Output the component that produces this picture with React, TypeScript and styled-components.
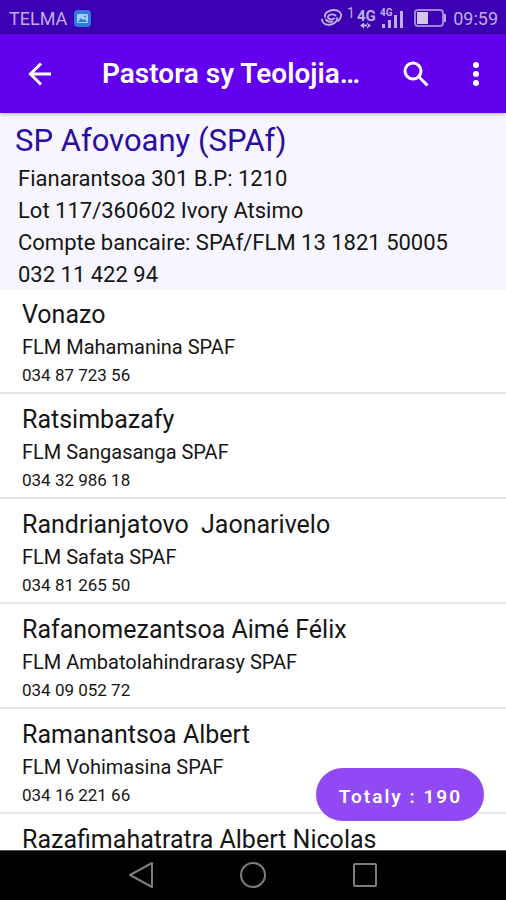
import React from "react";
import styled, { createGlobalStyle } from "styled-components";

const GlobalStyle = createGlobalStyle`
  * { box-sizing: border-box; }
  body {
    margin: 0;
    font-family: Roboto, "Noto Sans", sans-serif;
    background: #fff;
    color: #161616;
  }
`;

const Screen = styled.div`
  position: relative;
  display: flex;
  flex-direction: column;
  height: 100vh;
  overflow: hidden;
`;

const StatusBar = styled.div`
  flex: none;
  display: flex;
  align-items: center;
  justify-content: space-between;
  height: 34px;
  padding: 2px 8px 0 9px;
  background: #3a00b2;
  color: #c0aee6;
  font-size: 18px;
`;

const StatusGroup = styled.div<{ $gap: number }>`
  display: flex;
  align-items: center;
  gap: ${(p) => p.$gap}px;
`;

const AppBar = styled.header`
  position: relative;
  z-index: 1;
  flex: none;
  display: flex;
  align-items: center;
  gap: 20px;
  height: 79px;
  padding: 0 10px 0 20px;
  background: #6200ee;
  color: #fff;
  box-shadow: 0 1px 4px rgba(0, 0, 0, 0.3);
`;

const BarTitle = styled.h1`
  flex: 1;
  min-width: 0;
  margin: 0 0 0 22px;
  white-space: nowrap;
  font-size: 28px;
  font-weight: 600;
  line-height: 40px;
`;

const IconButton = styled.button`
  flex: none;
  display: flex;
  align-items: center;
  justify-content: center;
  width: 40px;
  height: 48px;
  padding: 0;
  border: 0;
  background: none;
  color: inherit;
`;

const Office = styled.section`
  flex: none;
  display: flex;
  flex-direction: column;
  gap: 4px;
  padding: 8px 18px 0 15px;
  background: #f7f5fd;
`;

const OfficeName = styled.h2`
  margin: 0;
  color: #2a0ca6;
  font-size: 31px;
  font-weight: 400;
  line-height: 40px;
`;

const OfficeLine = styled.p`
  margin: 0;
  padding-left: 3px;
  font-size: 22px;
  line-height: 28px;
`;

const List = styled.ul`
  flex: 1;
  min-height: 0;
  margin: 0;
  padding: 0;
  overflow: hidden;
  list-style: none;
`;

const Row = styled.li`
  padding: 10px 22px 5px;
  border-bottom: 2px solid #e6e6e6;
`;

const Name = styled.h3`
  margin: 0;
  font-size: 25px;
  font-weight: 400;
  line-height: 32px;
  white-space: pre-wrap;
`;

const Parish = styled.p`
  margin: 0;
  font-size: 20px;
  line-height: 32px;
`;

const Phone = styled.p`
  margin: 0;
  font-size: 17px;
  line-height: 24px;
`;

const TotalButton = styled.button`
  position: absolute;
  right: 22px;
  bottom: 79px;
  height: 53px;
  padding: 4px 22px 0 23px;
  border: 0;
  border-radius: 27px;
  background: #914af3;
  color: #fff;
  font-family: inherit;
  font-size: 19px;
  font-weight: 600;
  letter-spacing: 2px;
`;

const NavBar = styled.nav`
  flex: none;
  display: flex;
  justify-content: center;
  gap: 72px;
  height: 50px;
  border-top: 1px solid #555;
  background: #000;
  color: #7d7d7d;
`;

const people = [
  { name: "Vonazo", parish: "FLM Mahamanina SPAF", phone: "034 87 723 56" },
  { name: "Ratsimbazafy", parish: "FLM Sangasanga SPAF", phone: "034 32 986 18" },
  { name: "Randrianjatovo  Jaonarivelo", parish: "FLM Safata SPAF", phone: "034 81 265 50" },
  { name: "Rafanomezantsoa Aimé Félix", parish: "FLM Ambatolahindrarasy SPAF", phone: "034 09 052 72" },
  { name: "Ramanantsoa Albert", parish: "FLM Vohimasina SPAF", phone: "034 16 221 66" },
  { name: "Razafimahatratra Albert Nicolas", parish: "", phone: "" },
];

const officeLines = [
  "Fianarantsoa 301 B.P: 1210",
  "Lot 117/360602 Ivory Atsimo",
  "Compte bancaire: SPAf/FLM 13 1821 50005",
  "032 11 422 94",
];

const PictureIcon = () => (
  <svg width="17" height="17" viewBox="0 0 17 17" aria-hidden="true">
    <rect width="17" height="17" rx="4" fill="#2f78de" />
    <rect x="3" y="4" width="11" height="9" rx="1" fill="#a9ccf5" />
    <path d="M4 12l3-4 2 2 2-1 2 3z" fill="#2f78de" />
    <circle cx="11" cy="6.500" r="1" fill="#2f78de" />
  </svg>
);

const LinkIcon = () => (
  <svg width="23" height="20" viewBox="0 0 23 20" fill="none" stroke="currentColor" strokeWidth="1.800" strokeLinecap="round" aria-hidden="true">
    <path d="M15.500 7.500C12.500 5.500 8 6.500 8 9C8 11.500 12 12 14.500 10.500" />
    <path d="M2 11.500C2 15 6 17.500 11 16.500C15.500 15.500 17.500 12.500 17 10" />
    <path d="M5 9C4 5 9 2 14 2C19 2 21.500 5 21 8C20.500 10.500 19.500 12 18 13" />
    <path d="M6 11.500C7 13.500 10 14 12.500 13.500" />
  </svg>
);

const NetworkIcon = () => (
  <svg width="56" height="26" viewBox="0 0 56 26" fill="currentColor" fontFamily="Roboto, sans-serif" aria-hidden="true">
    <text x="0" y="13" fontSize="14">1</text>
    <text x="10" y="16" fontSize="15" fontWeight="700">4G</text>
    <path d="M13 20.500l4-3v6zM24 20.500l-4-3v6zM16 19.500h5v2h-5z" />
    <text x="33" y="11" fontSize="10" fontWeight="700">4G</text>
    <path d="M35 19h3v4h-3zM41 15h3v8h-3zM47 10h3v13h-3zM53 6h3v17h-3z" />
  </svg>
);

const BatteryIcon = () => (
  <svg width="33" height="18" viewBox="0 0 33 18" aria-hidden="true">
    <rect x="1" y="1" width="28" height="16" rx="3" fill="none" stroke="#9c86d5" strokeWidth="2" />
    <path d="M30 5h1q1 0 1 1v6q0 1-1 1h-1z" fill="#c0aee6" />
    <rect x="3" y="3" width="11" height="12" fill="#d2c5ee" />
  </svg>
);

export default function App() {
  return (
    <Screen>
      <GlobalStyle />
      <StatusBar>
        <StatusGroup $gap={7}>
          <span>TELMA</span>
          <PictureIcon />
        </StatusGroup>
        <StatusGroup $gap={11}>
          <StatusGroup $gap={4}>
            <LinkIcon />
            <NetworkIcon />
          </StatusGroup>
          <StatusGroup $gap={6}>
            <BatteryIcon />
            <span>09:59</span>
          </StatusGroup>
        </StatusGroup>
      </StatusBar>
      <AppBar>
        <IconButton type="button" aria-label="Back">
          <svg width="24" height="24" viewBox="0 0 24 24" fill="none" stroke="currentColor" strokeWidth="3" aria-hidden="true">
            <path d="M23 12H3M13 1.500L2.500 12L13 22.500" />
          </svg>
        </IconButton>
        <BarTitle>Pastora sy Teolojia…</BarTitle>
        <IconButton type="button" aria-label="Search">
          <svg width="26" height="26" viewBox="0 0 26 26" fill="none" stroke="currentColor" strokeWidth="3" aria-hidden="true">
            <circle cx="10" cy="10" r="8" />
            <path d="M15.500 15.500L24.500 24.500" />
          </svg>
        </IconButton>
        <IconButton type="button" aria-label="More options">
          <svg width="8" height="24" viewBox="0 0 8 24" fill="currentColor" aria-hidden="true">
            <circle cx="4" cy="3" r="3" />
            <circle cx="4" cy="12" r="3" />
            <circle cx="4" cy="21" r="3" />
          </svg>
        </IconButton>
      </AppBar>
      <Office>
        <OfficeName>SP Afovoany (SPAf)</OfficeName>
        {officeLines.map((line) => (
          <OfficeLine key={line}>{line}</OfficeLine>
        ))}
      </Office>
      <List>
        {people.map((person) => (
          <Row key={person.name}>
            <Name>{person.name}</Name>
            <Parish>{person.parish}</Parish>
            <Phone>{person.phone}</Phone>
          </Row>
        ))}
      </List>
      <TotalButton type="button">Totaly : 190</TotalButton>
      <NavBar>
        <IconButton type="button" aria-label="Back">
          <svg width="26" height="28" viewBox="0 0 26 28" fill="none" stroke="currentColor" strokeWidth="2" strokeLinejoin="round" aria-hidden="true">
            <path d="M2 14L24 2V26Z" />
          </svg>
        </IconButton>
        <IconButton type="button" aria-label="Home">
          <svg width="28" height="28" viewBox="0 0 28 28" fill="none" stroke="currentColor" strokeWidth="2" aria-hidden="true">
            <circle cx="14" cy="14" r="12" />
          </svg>
        </IconButton>
        <IconButton type="button" aria-label="Recent apps">
          <svg width="26" height="26" viewBox="0 0 26 26" fill="none" stroke="currentColor" strokeWidth="2" aria-hidden="true">
            <rect x="2" y="2" width="22" height="22" rx="1" />
          </svg>
        </IconButton>
      </NavBar>
    </Screen>
  );
}
